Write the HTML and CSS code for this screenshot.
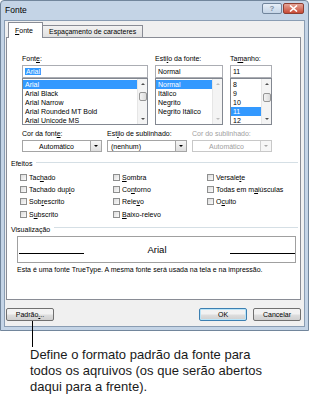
FILE: index.html
```
<!DOCTYPE html>
<html lang="pt-br">
<head>
  <meta charset="UTF-8">
  <title>Fonte</title>
  <link rel="stylesheet" href="styles.css">
</head>
<body>
  <div class="window">
    <div class="titlebar">
      <span class="title">Fonte</span>
      <div class="caption-btns">
        <span class="cap help">?</span>
        <span class="cap close">
          <svg width="9" height="7" viewBox="0 0 9 7"><path d="M1 0.5 L8 6.5 M8 0.5 L1 6.5" stroke="#fff" stroke-width="1.6"/></svg>
        </span>
      </div>
    </div>

    <div class="client">
      <div class="tabs">
        <span class="tab active"><u>F</u>onte</span>
        <span class="tab">Espaçamento de caracteres</span>
      </div>

      <div class="panel">
        <div class="fontrow">
          <div class="col c1">
            <div class="lbl">Font<u>e</u>:</div>
            <div class="input"><span class="sel">Arial</span></div>
            <div class="list">
              <ul>
                <li class="on">Arial</li>
                <li>Arial Black</li>
                <li>Arial Narrow</li>
                <li>Arial Rounded MT Bold</li>
                <li>Arial Unicode MS</li>
              </ul>
              <div class="sb">
                <span class="arr up"></span>
                <span class="thumb" style="margin-top:7px"></span>
                <span class="arr down"></span>
              </div>
            </div>
          </div>
          <div class="col c2">
            <div class="lbl">Esti<u>l</u>o da fonte:</div>
            <div class="input">Normal</div>
            <div class="list">
              <ul>
                <li class="on">Normal</li>
                <li>Itálico</li>
                <li>Negrito</li>
                <li>Negrito Itálico</li>
              </ul>
              <div class="sb off">
                <span class="arr up"></span>
                <span class="arr down"></span>
              </div>
            </div>
          </div>
          <div class="col c3">
            <div class="lbl">Ta<u>m</u>anho:</div>
            <div class="input">11</div>
            <div class="list">
              <ul>
                <li>8</li>
                <li>9</li>
                <li>10</li>
                <li class="on">11</li>
                <li>12</li>
              </ul>
              <div class="sb">
                <span class="arr up"></span>
                <span class="thumb" style="margin-top:8px"></span>
                <span class="arr down"></span>
              </div>
            </div>
          </div>
        </div>

        <div class="droprow">
          <div class="col">
            <div class="lbl">Cor da font<u>e</u>:</div>
            <div class="combo center">
              <span class="val">Automático</span>
              <span class="btn"></span>
            </div>
          </div>
          <div class="col">
            <div class="lbl">Est<u>i</u>lo de sublinhado:</div>
            <div class="combo">
              <span class="val">(nenhum)</span>
              <span class="btn"></span>
            </div>
          </div>
          <div class="col disabled">
            <div class="lbl">Cor do sublinhado:</div>
            <div class="combo center">
              <span class="val">Automático</span>
              <span class="btn"></span>
            </div>
          </div>
        </div>

        <div class="group">Efeitos</div>
        <div class="checks">
          <label class="chk"><span class="box"></span><span>Tac<u>h</u>ado</span></label>
          <label class="chk"><span class="box"></span><span><u>S</u>ombra</span></label>
          <label class="chk"><span class="box"></span><span>Versale<u>t</u>e</span></label>
          <label class="chk"><span class="box"></span><span>Tachado dup<u>l</u>o</span></label>
          <label class="chk"><span class="box"></span><span>Co<u>n</u>torno</span></label>
          <label class="chk"><span class="box"></span><span>Todas em m<u>a</u>iúsculas</span></label>
          <label class="chk"><span class="box"></span><span>Sob<u>r</u>escrito</span></label>
          <label class="chk"><span class="box"></span><span>Rele<u>v</u>o</span></label>
          <label class="chk"><span class="box"></span><span>O<u>c</u>ulto</span></label>
          <label class="chk"><span class="box"></span><span>S<u>u</u>bscrito</span></label>
          <label class="chk"><span class="box"></span><span><u>B</u>aixo-relevo</span></label>
        </div>

        <div class="group">Visualização</div>
        <div class="preview">
          <span class="base"></span>
          <span class="sample">Arial</span>
          <span class="base"></span>
        </div>
        <p class="note">Esta é uma fonte TrueType. A mesma fonte será usada na tela e na impressão.</p>
      </div>

      <div class="buttons">
        <span class="button padrao">Padrão<u>.</u>..<span class="pointer"></span></span>
        <span class="spacer"></span>
        <span class="button default">OK</span>
        <span class="button">Cancelar</span>
      </div>
    </div>
  </div>

  <p class="caption">Define o formato padrão da fonte para<br>todos os aqruivos (os que serão abertos<br>daqui para a frente).</p>
</body>
</html>
```

FILE: styles.css
```
* { box-sizing: border-box; margin: 0; padding: 0; }
body {
  width: 309px;
  height: 407px;
  overflow: hidden;
  background: #fff;
  font-family: 'Liberation Sans', Arial, sans-serif;
  font-size: 7px;
  color: #000;
}
u { text-decoration-thickness: 1px; }

.window {
  width: 309px;
  height: 331px;
  background: #c4d4e6;
  border: 1px solid #72869c;
  border-radius: 4px 4px 0 0;
  padding: 0 3px 3px;
  display: flex;
  flex-direction: column;
}
.titlebar {
  height: 19px;
  display: flex;
  justify-content: space-between;
  align-items: flex-start;
}
.title {
  font-size: 8.5px;
  padding: 4px 0 0 1px;
}
.caption-btns {
  display: flex;
  gap: 1px;
  margin-top: 2px;
  margin-right: 1px;
}
.cap {
  width: 20px;
  height: 11px;
  border: 1px solid #71859c;
  border-radius: 2px;
  display: flex;
  align-items: center;
  justify-content: center;
  font-size: 8px;
  font-weight: bold;
}
.help {
  background: linear-gradient(#e6eef7, #c5d5e7);
  color: #7d8ea3;
}
.close {
  width: 21px;
  background: linear-gradient(#e6a597, #c84a35);
  border-color: #8d3f33;
}

.client {
  flex: 1;
  background: #f0f0f0;
  border: 1px solid #8a9db3;
  padding: 1px 3px 0 1px;
  display: flex;
  flex-direction: column;
}

.tabs {
  display: flex;
  align-items: flex-end;
  height: 15px;
  padding-left: 2px;
}
.tab {
  height: 12px;
  padding: 0 6px;
  line-height: 11px;
  border: 1px solid #898c95;
  border-bottom: none;
  background: linear-gradient(#f2f2f2, #e0e0e0);
  margin-left: -1px;
  white-space: nowrap;
}
.tab.active {
  height: 16px;
  margin-left: 0;
  margin-bottom: -1px;
  padding-top: 2px;
  background: #fff;
  position: relative;
  z-index: 1;
  width: 35px;
}

.panel {
  height: 263px;
  background: #fff;
  border: 1px solid #898c95;
  padding: 16px 0 0 15px;
}

.lbl {
  line-height: 9px;
  height: 9px;
  margin-bottom: 2px;
  white-space: nowrap;
}

.fontrow {
  display: flex;
  gap: 7px;
}
.c1 { width: 126px; }
.c2 { width: 68px; }
.c3 { width: 42px; }

.input {
  height: 13px;
  border: 1px solid #abadb3;
  background: #fff;
  padding: 1px 2px;
  line-height: 9px;
}
.sel {
  background: #3399ff;
  color: #fff;
  padding: 0 1px;
}
.list {
  height: 47px;
  border: 1px solid #828790;
  display: flex;
}
.list ul {
  flex: 1;
  list-style: none;
  padding-top: 0.5px;
}
.list li {
  height: 9.2px;
  line-height: 9.2px;
  padding-left: 2px;
  white-space: nowrap;
  overflow: hidden;
}
.list li.on {
  background: #3399ff;
  color: #fff;
}
.sb {
  width: 10px;
  background: #f4f4f4;
  border-left: 1px solid #e6e6e6;
  display: flex;
  flex-direction: column;
  align-items: center;
}
.arr {
  width: 0;
  height: 0;
  border-left: 2px solid transparent;
  border-right: 2px solid transparent;
  margin-top: 4px;
}
.arr.up { border-bottom: 2px solid #505050; }
.arr.down { border-top: 2px solid #505050; margin-top: auto; margin-bottom: 4px; }
.sb.off .arr.up { border-bottom-color: #bdbdbd; }
.sb.off .arr.down { border-top-color: #bdbdbd; }
.thumb {
  width: 8px;
  height: 9px;
  border: 1px solid #969696;
  border-radius: 2px;
  background: linear-gradient(90deg, #f3f3f3, #dcdcdc);
}

.droprow {
  display: flex;
  gap: 5px;
  margin-top: 4px;
}
.droprow .col { width: 80px; }
.combo {
  height: 12px;
  border: 1px solid #a5a5a5;
  background: #fff;
  display: flex;
  align-items: center;
}
.combo .val {
  flex: 1;
  padding-left: 3px;
  white-space: nowrap;
}
.combo.center .val {
  text-align: center;
  padding-left: 0;
}
.combo .btn {
  width: 11px;
  height: 10px;
  border-left: 1px solid #a5a5a5;
  background: linear-gradient(#f6f6f6, #dedede);
  display: flex;
  align-items: center;
  justify-content: center;
}
.combo .btn::after {
  content: '';
  border-left: 2.5px solid transparent;
  border-right: 2.5px solid transparent;
  border-top: 2.5px solid #000;
}
.disabled { color: #a0a0a0; }
.disabled .combo { border-color: #c8c8c8; }
.disabled .combo .btn { border-left-color: #d0d0d0; background: #f7f7f7; }
.disabled .combo .btn::after { border-top-color: #a8a8a8; }

.group {
  display: flex;
  align-items: center;
  gap: 4px;
  margin: 7px 2px 0 -11px;
  line-height: 9px;
}
.group::after {
  content: '';
  flex: 1;
  height: 2px;
  border-top: 1px solid #d5dfe5;
  border-bottom: 1px solid #fff;
}

.checks {
  display: grid;
  grid-template-columns: 93px 94px 1fr;
  grid-auto-rows: 12.4px;
  margin: 3px 0 0 -2px;
}
.chk {
  display: flex;
  align-items: center;
  gap: 2px;
  white-space: nowrap;
}
.box {
  width: 7px;
  height: 7px;
  border: 1px solid #8e8f8f;
  background: linear-gradient(135deg, #dcdcdc, #fbfbfb);
}

.checks + .group { margin-top: 4px; }

.preview {
  width: 279px;
  height: 27px;
  margin: 2px 0 0 -5px;
  border: 1px solid #a0a0a0;
  background: #fff;
  display: flex;
  align-items: center;
  padding: 0 0 0 1px;
}
.preview .base {
  width: 65px;
  height: 1px;
  margin-top: 8px;
  background: #000;
}
.preview .sample {
  flex: 1;
  text-align: center;
  font-size: 9.5px;
}
.note {
  margin: 2px 0 0 -5px;
  line-height: 9px;
  white-space: nowrap;
}

.buttons {
  display: flex;
  gap: 6px;
  margin-top: 8px;
}
.spacer { flex: 1; }
.button {
  width: 48px;
  height: 13px;
  border: 1px solid #707070;
  border-radius: 2px;
  background: linear-gradient(#f2f2f2 45%, #dddddd 55%, #cfcfcf);
  text-align: center;
  line-height: 11px;
}
.button.default {
  border-color: #3c7fb1;
  box-shadow: inset 0 0 0 1px #b9e4f8;
}
.padrao { position: relative; }
.pointer {
  position: absolute;
  left: 25px;
  top: 12px;
  width: 1px;
  height: 26px;
  background: #000;
}

.caption {
  margin: 16px 0 0 30px;
  font-size: 13px;
  line-height: 16px;
  color: #1a1a1a;
}
```
